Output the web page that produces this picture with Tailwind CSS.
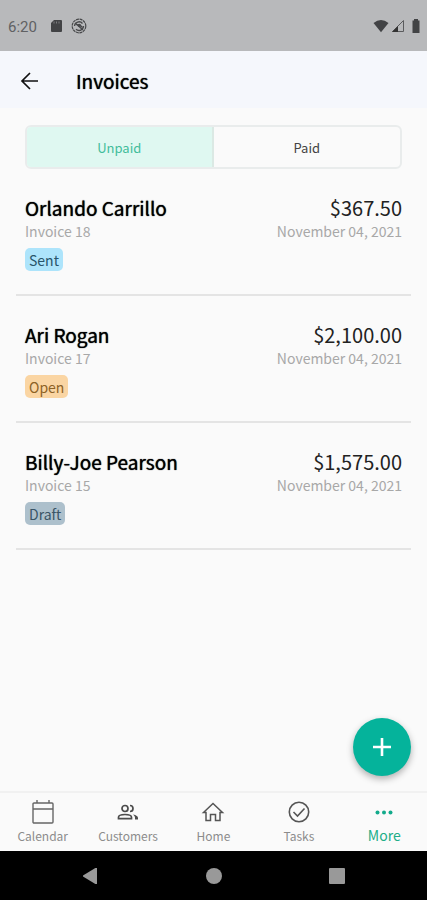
<!DOCTYPE html>
<html lang="en">
<head>
<meta charset="utf-8">
<meta name="viewport" content="width=device-width, initial-scale=1">
<title>Invoices</title>
<script src="https://cdn.jsdelivr.net/npm/@tailwindcss/browser@4"></script>
</head>
<body class="flex min-h-screen flex-col bg-[#fafafa] font-['Noto_Sans_CJK_SC','Noto_Sans',sans-serif] text-black">
  <div class="flex h-[51px] items-center bg-[#b8b9bb] pr-1.5 pl-2 text-[#606163]">
    <span class="pt-0.5 font-[Roboto,sans-serif] text-[15px] leading-5">6:20</span>
    <svg class="ml-3 size-3.5" viewBox="0 0 14 14" fill="#424345" aria-hidden="true"><path d="M5 1h7q1 0 1 1v10q0 1-1 1H3q-1 0-1-1V4z"/><path d="M5 2.500v2M7.500 2.500v2M10 2.500v2" stroke="#8b8c8e" stroke-width=".8"/></svg>
    <svg class="ml-2 size-4" viewBox="0 0 16 16" fill="none" stroke="#48494b" aria-hidden="true"><circle cx="8" cy="8" r="6.800" stroke-width="1.200" stroke-dasharray="3 .6"/><path d="M3.500 8a4.500 4.500 0 0 1 8-2.500M12.500 8a4.500 4.500 0 0 1-7.500 3.300" stroke-width="1.300"/><path d="M5.500 7l3-.5 3 3M4 5l8 7" stroke-width="1.200"/><circle cx="8.500" cy="7.500" r="1.500" fill="#48494b" stroke="none"/></svg>
    <svg class="ml-auto h-3.5 w-4" viewBox="0 0 16 14" fill="#424345" aria-hidden="true"><path d="M.5 4Q8-2 15.500 4L8 13.300z"/></svg>
    <svg class="ml-0.5 size-3.5" viewBox="0 0 14 14" fill="none" stroke="#5a5b5d" aria-hidden="true"><path d="M1.500 12.500L12.500 1.500v11z"/><path d="M1 13L7 7v6z" fill="#333" stroke="none"/></svg>
    <svg class="ml-1.5 h-3.5 w-2.5" viewBox="0 0 10 14" fill="#424345" aria-hidden="true"><path d="M3 0h4v1.500h1.500V14h-7V1.500H3z"/></svg>
  </div>
  <header class="flex h-[57px] items-center bg-[#f5f7fc] px-5 pt-0.5">
    <button type="button" aria-label="Back" class="flex size-5 items-center justify-center">
      <svg class="size-5" viewBox="0 0 20 20" fill="none" stroke="#111" stroke-width="1.700"><path d="M18 10H2.500M10 2L2 10l8 8"/></svg>
    </button>
    <h1 class="ml-9 text-[19px] leading-7 font-normal [text-shadow:0_0_1px_#000]">Invoices</h1>
  </header>
  <main class="flex-1 px-4">
    <div class="mx-[9px] mt-[17px] grid h-11 grid-cols-2 overflow-hidden rounded-md border-2 border-[#e9ecec] text-[13px]" role="group" aria-label="Invoice status">
      <button type="button" aria-pressed="true" class="border-r-2 border-[#dbe9e4] bg-[#dff8f1] pt-0.5 text-[#43bd9b]">Unpaid</button>
      <button type="button" aria-pressed="false" class="pt-0.5 text-[#444]">Paid</button>
    </div>
    <ul>
      <li class="border-b-2 border-[#e4e4e4] px-[9px] pt-[26px] pb-[23px]">
        <div class="flex justify-between text-xl leading-[26px]"><h2 class="text-[19px] font-normal [text-shadow:0_0_1px_#000]">Orlando Carrillo</h2><span class="text-[#222]">$367.50</span></div>
        <div class="flex justify-between text-sm leading-5 text-[#a8a8a8]"><span>Invoice 18</span><time datetime="2021-11-04">November 04, 2021</time></div>
        <span class="mt-[7px] flex h-[23px] w-fit items-center rounded-[5px] bg-[#ade4fb] px-1 text-sm text-[#28546a]">Sent</span>
      </li>
      <li class="border-b-2 border-[#e4e4e4] px-[9px] pt-[26px] pb-[23px]">
        <div class="flex justify-between text-xl leading-[26px]"><h2 class="text-[19px] font-normal [text-shadow:0_0_1px_#000]">Ari Rogan</h2><span class="text-[#222]">$2,100.00</span></div>
        <div class="flex justify-between text-sm leading-5 text-[#a8a8a8]"><span>Invoice 17</span><time datetime="2021-11-04">November 04, 2021</time></div>
        <span class="mt-[7px] flex h-[23px] w-fit items-center rounded-[5px] bg-[#fad5a3] px-1 text-sm text-[#8d6226]">Open</span>
      </li>
      <li class="border-b-2 border-[#e4e4e4] px-[9px] pt-[26px] pb-[23px]">
        <div class="flex justify-between text-xl leading-[26px]"><h2 class="text-[19px] font-normal [text-shadow:0_0_1px_#000]">Billy-Joe Pearson</h2><span class="text-[#222]">$1,575.00</span></div>
        <div class="flex justify-between text-sm leading-5 text-[#a8a8a8]"><span>Invoice 15</span><time datetime="2021-11-04">November 04, 2021</time></div>
        <span class="mt-[7px] flex h-[23px] w-fit items-center rounded-[5px] bg-[#adc0cc] px-1 text-sm text-[#3a5566]">Draft</span>
      </li>
    </ul>
  </main>
  <div class="sticky bottom-0">
    <button type="button" aria-label="Add invoice" class="absolute right-4 bottom-[124px] flex size-[58px] items-center justify-center rounded-full bg-[#05b39b] shadow-[0_3px_7px_rgba(0,0,0,0.3)]">
      <svg class="size-5" viewBox="0 0 20 20" stroke="#fff" stroke-width="2.600"><path d="M10 1v18M1 10h18"/></svg>
    </button>
    <nav class="grid h-[60px] grid-cols-5 border-t-2 border-[#f1f1f1] bg-[#fafafa] text-xs leading-4 text-[#8c8c8c]" aria-label="Main">
      <a href="#" class="flex flex-col items-center gap-1 pt-[7px]"><svg class="size-6" viewBox="0 0 24 24" fill="none" stroke="#666" stroke-width="1.400"><rect x="2" y="3" width="20" height="20" rx="1"/><path d="M2 9h20M6 0v3M18 0v3"/></svg>Calendar</a>
      <a href="#" class="flex flex-col items-center gap-1 pt-[7px]"><svg class="size-6" viewBox="0 0 24 24" fill="none" stroke="#4c4c4c" stroke-width="1.700"><circle cx="9" cy="8.500" r="3"/><path d="M2.500 18.700v-1.400C2.500 15.500 6 14.500 9 14.500s6.500 1 6.500 2.800v1.400zM14 5.500a3 3 0 1 1 0 6"/><path d="M17 14.500q5 1 5 3.500v1.500h-3v-2q0-1.700-2-3z" fill="#4c4c4c" stroke="none"/></svg>Customers</a>
      <a href="#" class="flex flex-col items-center gap-1 pt-[7px]"><svg class="size-6" viewBox="0 0 24 24" fill="none" stroke="#555" stroke-width="1.500"><path d="M2.500 12.500L12 3.500l9.500 9H19V20.500h-4.500v-6h-5v6H5v-8z"/></svg>Home</a>
      <a href="#" class="flex flex-col items-center gap-1 pt-[7px]"><svg class="size-6" viewBox="0 0 24 24" fill="none" stroke="#555" stroke-width="1.600"><circle cx="12" cy="12" r="9.700"/><path d="M6.500 12l4 4 7-7.500"/></svg>Tasks</a>
      <a href="#" aria-current="page" class="flex flex-col items-center gap-[3px] pt-[7px] text-sm leading-4 text-[#20ad87]"><svg class="size-6" viewBox="0 0 24 24" fill="#12aa8b"><circle cx="5.500" cy="12.500" r="2"/><circle cx="12" cy="12.500" r="2"/><circle cx="18.500" cy="12.500" r="2"/></svg>More</a>
    </nav>
    <div class="flex h-[49px] items-center justify-center gap-[107px] bg-black">
      <button type="button" aria-label="Back"><svg class="size-4" viewBox="0 0 16 16" fill="#999"><path d="M-1 8L14-1v18z"/></svg></button>
      <button type="button" aria-label="Home"><svg class="size-4" viewBox="0 0 16 16" fill="#999"><circle cx="8" cy="8" r="8"/></svg></button>
      <button type="button" aria-label="Overview"><svg class="size-4" viewBox="0 0 16 16" fill="#999"><rect width="16" height="16" rx="1"/></svg></button>
    </div>
  </div>
</body>
</html>
